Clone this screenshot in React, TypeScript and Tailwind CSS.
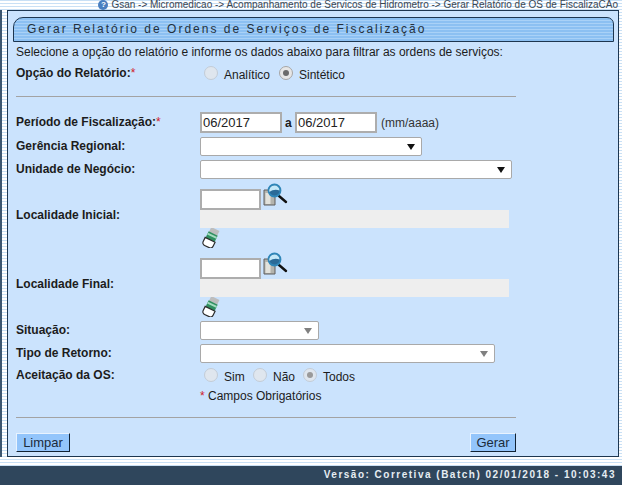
import React from 'react';

const stripes =
  'bg-[repeating-linear-gradient(180deg,#c9e0f5_0px,#c9e0f5_1px,#ffffff_1px,#ffffff_3px)]';

const Req = () => <span className="font-normal text-[#d0202a]">*</span>;

const Radio: React.FC<{ checked?: boolean; faded?: boolean }> = ({ checked, faded }) => (
  <span
    className={`flex h-[14px] w-[14px] shrink-0 items-center justify-center rounded-full border ${
      faded ? 'border-[#c3ccd6] bg-[#dfe6ee]' : 'border-[#a6a6a6] bg-[#e6e6e6]'
    }`}
  >
    {checked && <span className={`h-[6px] w-[6px] rounded-full ${faded ? 'bg-[#9a9a9a]' : 'bg-[#6b6b6b]'}`} />}
  </span>
);

const TextBox: React.FC<{ value?: string; className?: string }> = ({ value, className }) => (
  <div
    className={`flex items-center border-2 border-[#adadad] bg-white pl-px text-[13px] leading-none text-[#222] ${className}`}
  >
    {value}
  </div>
);

const SelectBox: React.FC<{ className: string; faded?: boolean }> = ({ className, faded }) => (
  <div
    className={`flex h-[19px] items-center justify-end rounded-[2px] border border-[#a9a9a9] bg-white pr-[6px] ${className}`}
  >
    <span
      className={`h-0 w-0 border-x-[4px] border-t-[6px] border-x-transparent ${
        faded ? 'border-t-[#808080]' : 'border-t-[#111]'
      }`}
    />
  </div>
);

const SearchIcon = () => (
  <svg width="26" height="24" viewBox="0 0 26 24" className="ml-[2px] shrink-0">
    <path d="M1 7h8l3 3v12H1z" fill="#b4b4ae" stroke="#5f5f5f" strokeWidth="1" />
    <path d="M2.500 10h5v11h-5z" fill="#e2e2dc" />
    <line x1="16" y1="13" x2="23" y2="19" stroke="#111" strokeWidth="2.400" strokeLinecap="round" />
    <circle cx="11.500" cy="7.500" r="6" fill="#2a6a98" stroke="#2f86b8" strokeWidth="1.800" />
    <path d="M6.500 9a5 5 0 0 1 5-6.500a5 5 0 0 1 5 5c-3-1.500-7-1-10 1.500z" fill="#c4e8f8" />
  </svg>
);

const EraserIcon = () => (
  <svg width="20" height="20" viewBox="0 0 20 20" className="shrink-0">
    <g transform="rotate(26 10 10)">
      <path d="M5.500 0h9v6h-9z" fill="#bdbdbd" />
      <path d="M5 5h10v7h-10z" fill="#2f8f60" />
      <path d="M5 6.500h10v2h-10z" fill="#a4dcc0" />
      <path d="M4.500 12h11v4.500c0 1.800-1.500 3-3 3h-5c-1.500 0-3-1.200-3-3z" fill="#fff" stroke="#2c2c2c" strokeWidth="1.200" />
    </g>
  </svg>
);

const Button: React.FC<{ label: string; className: string }> = ({ label, className }) => (
  <div
    className={`flex h-[19px] items-center justify-center border border-b-[#123] border-l-[#e8f3ff] border-r-[#123] border-t-[#e8f3ff] bg-[#93c5fb] text-[13px] text-[#1b2b3a] ${className}`}
  >
    {label}
  </div>
);

const Locality: React.FC<{ label: string }> = ({ label }) => (
  <div className="flex">
    <div className="w-[184px] shrink-0 self-center pb-[2px] font-bold">{label}</div>
    <div>
      <div className="flex h-[27px] items-end">
        <TextBox className="h-[21px] w-[61px]" />
        <div className="mb-[3px]">
          <SearchIcon />
        </div>
      </div>
      <div className="h-[18px] w-[309px] bg-[#eeeeee]" />
      <div className="h-[20px] pl-[1px]">
        <EraserIcon />
      </div>
    </div>
  </div>
);

export default function App() {
  return (
    <div className="flex h-[485px] w-[622px] flex-col overflow-hidden bg-white font-['Liberation_Sans',Arial,sans-serif] text-[12px] text-[#1c1c1c]">
      <div className={`flex flex-1 flex-col ${stripes}`}>
        {/* breadcrumb */}
        <div className="flex h-[10px] items-center justify-end pr-[4px] text-[10px] leading-none text-[#3b4652]">
          <span className="mr-[3px] flex h-[10px] w-[10px] items-center justify-center rounded-full bg-[#4a7fc0] text-[8px] font-bold text-white">
            ?
          </span>
          <span className="whitespace-nowrap">
            Gsan -&gt; Micromedicao -&gt; Acompanhamento de Servicos de Hidrometro -&gt; Gerar Relatório de OS de FiscalizaCAo
          </span>
        </div>

        <div className="flex">
          <div className="h-[447px] w-[2px] bg-[#3c5670]" />
          <div className="ml-[5px] h-[447px] w-[612px] border border-[#1d3650] bg-[#cbe3fd] pl-[5px] pt-[6px]">
            {/* title */}
            <div className="h-[25px] w-[601px] rounded-tl-[10px] rounded-tr-[7px] border border-[#1d3650] bg-[repeating-linear-gradient(180deg,#8cc0f2_0px,#8cc0f2_2px,#a9d1f7_2px,#a9d1f7_3px)] pl-[13px] text-[12px] leading-[22px] tracking-[2px] text-[#24303c]">
              Gerar Relatório de Ordens de Serviços de Fiscalização
            </div>

            <div className="pl-[3px]">
              <div className="mt-[2px] h-[18px] leading-[17px]">
                Selecione a opção do relatório e informe os dados abaixo para filtrar as ordens de serviços:
              </div>

              <div className="mt-[3px] flex h-[18px] items-center">
                <div className="w-[188px] shrink-0 pb-[3px] font-bold">
                  Opção do Relatório:<Req />
                </div>
                <span className="pb-[3px]"><Radio faded /></span>
                <span className="ml-[6px] w-[42px] pt-[2px]">Analítico</span>
                <span className="ml-[13px] pb-[3px]"><Radio checked /></span>
                <span className="ml-[6px] pt-[1px]">Sintético</span>
              </div>

              <div className="mt-[13px] h-px w-[500px] bg-[#a3a3a3]" />

              <div className="mt-[15px] flex h-[21px] items-center">
                <div className="w-[184px] shrink-0 pb-[2px] font-bold">
                  Período de Fiscalização:<Req />
                </div>
                <TextBox value="06/2017" className="h-[21px] w-[82px]" />
                <span className="ml-[3px] w-[10px] font-bold">a</span>
                <TextBox value="06/2017" className="h-[21px] w-[82px]" />
                <span className="ml-[4px] text-[#333]">(mm/aaaa)</span>
              </div>

              <div className="mt-[4px] flex h-[19px] items-center">
                <div className="w-[184px] shrink-0 pb-[2px] font-bold">Gerência Regional:</div>
                <SelectBox className="w-[222px]" />
              </div>

              <div className="mt-[4px] flex h-[19px] items-center">
                <div className="w-[184px] shrink-0 pb-[2px] font-bold">Unidade de Negócio:</div>
                <SelectBox className="w-[312px]" />
              </div>

              <div className="mt-[4px]">
                <Locality label="Localidade Inicial:" />
              </div>
              <div className="mt-[4px]">
                <Locality label="Localidade Final:" />
              </div>

              <div className="mt-[4px] flex h-[19px] items-center">
                <div className="w-[184px] shrink-0 pb-[2px] font-bold">Situação:</div>
                <SelectBox className="w-[119px]" faded />
              </div>

              <div className="mt-[4px] flex h-[19px] items-center">
                <div className="w-[184px] shrink-0 pb-[2px] font-bold">Tipo de Retorno:</div>
                <SelectBox className="w-[295px]" faded />
              </div>

              <div className="mt-[4px] flex h-[18px] items-center">
                <div className="w-[188px] shrink-0 pb-[3px] font-bold">Aceitação da OS:</div>
                <span className="pb-[2px]"><Radio faded /></span>
                <span className="ml-[6px] w-[29px] pt-[2px]">Sim</span>
                <span className="pb-[2px]"><Radio faded /></span>
                <span className="ml-[6px] w-[30px] pt-[2px]">Não</span>
                <span className="pb-[2px]"><Radio checked faded /></span>
                <span className="ml-[6px] pt-[1px]">Todos</span>
              </div>

              <div className="mt-[3px] h-[16px] pl-[184px] leading-[16px]">
                <Req /> Campos Obrigatórios
              </div>

              <div className="mt-[13px] h-px w-[500px] bg-[#a3a3a3]" />

              <div className="mt-[15px] flex w-[500px] justify-between">
                <Button label="Limpar" className="w-[54px]" />
                <Button label="Gerar" className="w-[46px]" />
              </div>
            </div>
          </div>
        </div>
      </div>

      {/* footer */}
      <div className="flex h-[19px] shrink-0 items-center justify-end bg-[#2f465c] pb-[2px] pr-[6px] text-[10px] font-bold tracking-[1.5px] text-[#e6edf3]">
        Versão: Corretiva (Batch) 02/01/2018 - 10:03:43
      </div>
    </div>
  );
}
